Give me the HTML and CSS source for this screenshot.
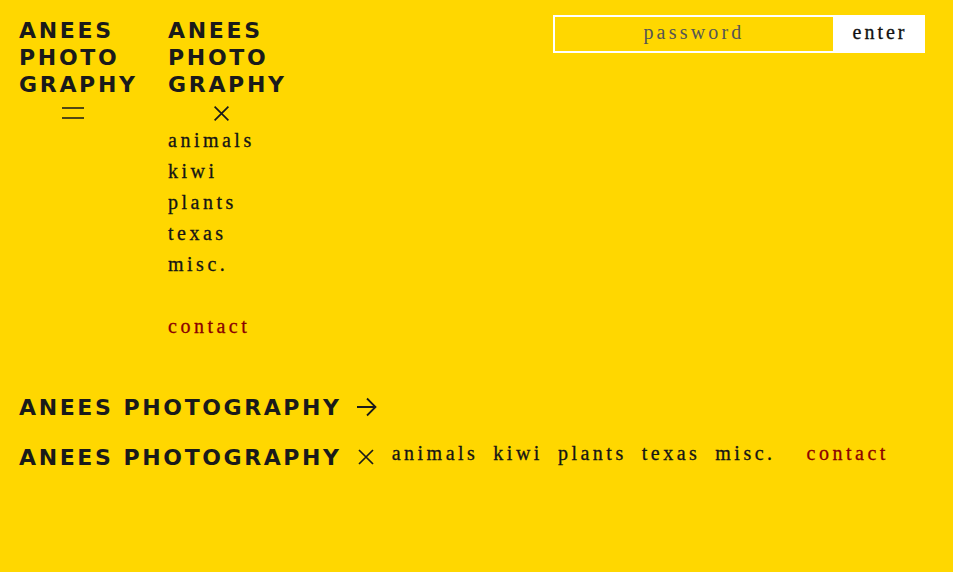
FILE: index.html
```html
<!DOCTYPE html>
<html>
<head>
<meta charset="utf-8">
<link rel="stylesheet" href="styles.css">
</head>
<body>
<div class="page">
  <div class="top">
    <div class="logo-block">
      <div class="logo">ANEES<br>PHOTO<br>GRAPHY</div>
      <div class="toggle toggle-menu">
        <svg width="22" height="12" viewBox="0 0 22 12"><path d="M0 1h22M0 11h22" stroke="#1a1a1a" stroke-width="1.6"/></svg>
      </div>
    </div>
    <div class="logo-block open">
      <div class="logo">ANEES<br>PHOTO<br>GRAPHY</div>
      <div class="toggle toggle-close">
        <svg width="15" height="15" viewBox="0 0 15 15"><path d="M0.6 0.6L14.4 14.4M14.4 0.6L0.6 14.4" stroke="#1a1a1a" stroke-width="1.7"/></svg>
      </div>
      <ul class="menu">
        <li>animals</li>
        <li>kiwi</li>
        <li>plants</li>
        <li>texas</li>
        <li>misc.</li>
        <li class="contact">contact</li>
      </ul>
    </div>
    <form class="pw">
      <input class="pw-input" type="text" placeholder="password">
      <button class="pw-btn" type="button">enter</button>
    </form>
  </div>
  <div class="bars">
    <div class="bar">
      <span class="bar-logo">ANEES PHOTOGRAPHY</span>
      <svg class="arrow" width="22" height="20" viewBox="0 0 22 20"><path d="M1 10H20M11 1.5L19.5 10L11 18.5" fill="none" stroke="#1a1a1a" stroke-width="1.8"/></svg>
    </div>
    <div class="bar">
      <span class="bar-logo">ANEES PHOTOGRAPHY</span>
      <svg class="xicon" width="16" height="16" viewBox="0 0 16 16"><path d="M1 1L15 15M15 1L1 15" fill="none" stroke="#1a1a1a" stroke-width="1.7"/></svg>
      <ul class="hmenu">
        <li>animals</li>
        <li>kiwi</li>
        <li>plants</li>
        <li>texas</li>
        <li>misc.</li>
        <li class="contact">contact</li>
      </ul>
    </div>
  </div>
</div>
</body>
</html>
```
FILE: styles.css
```css
html, body {
  margin: 0;
  padding: 0;
  background: #ffd700;
}
body {
  width: 953px;
  height: 572px;
  overflow: hidden;
}
.page {
  padding: 17px 28px 0 19px;
}
.top {
  display: flex;
  align-items: flex-start;
  height: 378px;
}
.logo-block {
  width: 149px;
}
.logo {
  font-family: "DejaVu Sans", sans-serif;
  font-weight: bold;
  font-size: 22px;
  line-height: 27px;
  letter-spacing: 2.7px;
  color: #1a1a1a;
}
.toggle {
  display: flex;
  justify-content: center;
  align-items: flex-start;
  width: 108px;
  height: 24px;
  padding-top: 9px;
}
.toggle-close {
  padding-top: 8px;
  height: 19px;
  width: 107px;
}
.menu {
  list-style: none;
  margin: 0;
  padding: 0;
  font-family: "Liberation Serif", serif;
  font-size: 20px;
  letter-spacing: 3.5px;
  color: #151515;
  -webkit-text-stroke: 0.3px #151515;
}
.menu li {
  line-height: 31px;
}
.menu li.contact {
  margin-top: 31px;
}
.contact {
  color: #8b0000;
}
.menu li.contact, .hmenu li.contact {
  -webkit-text-stroke: 0.3px #8b0000;
}
.pw {
  margin-left: auto;
  display: flex;
  height: 38px;
  margin-top: -2px;
}
.pw-input {
  box-sizing: border-box;
  width: 280px;
  height: 38px;
  border: 2px solid #fff;
  border-right: none;
  background: transparent;
  font-family: "Liberation Serif", serif;
  font-size: 20px;
  letter-spacing: 3.2px;
  text-align: center;
  padding: 0 0 4px 0;
  outline: none;
}
.pw-input::placeholder {
  color: #555;
}
.pw-btn {
  width: 92px;
  height: 38px;
  border: none;
  background: #fff;
  font-family: "Liberation Serif", serif;
  font-size: 20px;
  letter-spacing: 3px;
  color: #111;
  -webkit-text-stroke: 0.3px #111;
  padding: 0 0 4px 2px;
}
.bars {
  display: flex;
  flex-direction: column;
  gap: 26px;
}
.bar {
  display: flex;
  align-items: center;
  height: 24px;
}
.bar-logo {
  font-family: "DejaVu Sans", sans-serif;
  font-weight: bold;
  font-size: 22px;
  letter-spacing: 2.6px;
  color: #1a1a1a;
  white-space: nowrap;
}
.arrow {
  margin-left: 14px;
}
.xicon {
  margin-left: 16px;
}
.hmenu {
  list-style: none;
  display: flex;
  margin: -7px 0 0 18px;
  padding: 0;
  gap: 15px;
  font-family: "Liberation Serif", serif;
  font-size: 20px;
  letter-spacing: 3.5px;
  color: #151515;
  -webkit-text-stroke: 0.3px #151515;
}
.hmenu li.contact {
  margin-left: 16px;
}
```
